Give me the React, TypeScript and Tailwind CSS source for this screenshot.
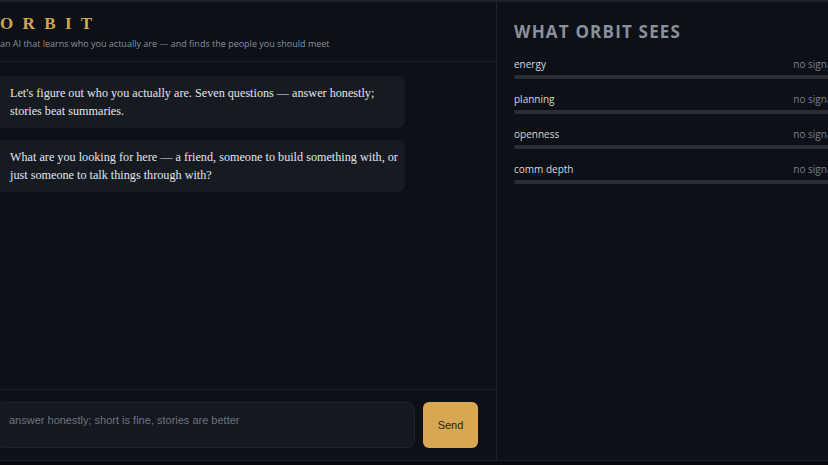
const traits = ["energy", "planning", "openness", "comm depth"];

const messages = [
  "Let's figure out who you actually are. Seven questions — answer honestly; stories beat summaries.",
  "What are you looking for here — a friend, someone to build something with, or just someone to talk things through with?",
];

const App = () => {
  return (
    <div className="w-[828px] h-[465px] overflow-hidden bg-[#07080b]">
      <div className="flex w-[872px] h-[461px] -ml-[20px] bg-[#0d1017] border-t-2 border-b border-[#1d2129]">
        {/* chat column */}
        <div className="w-[517px] flex flex-col border-r border-[#1d2129]">
          <div className="h-[60px] px-[20px] pt-[12px] border-b border-[#1b1f27]">
            <div
              className="text-[17px] font-bold tracking-[0.55em] text-[#d3a552] leading-[20px]"
              style={{ fontFamily: '"Liberation Serif", serif' }}
            >
              ORBIT
            </div>
            <div
              className="mt-[3px] text-[9px] text-[#8a9099] leading-[14px]"
              style={{ fontFamily: '"Open Sans", sans-serif' }}
            >
              an AI that learns who you actually are — and finds the people you should meet
            </div>
          </div>

          <div className="flex-1 px-[16px] pt-[14px] flex flex-col gap-[12px]">
            {messages.map((m, i) => (
              <div
                key={i}
                className="w-[409px] rounded-lg bg-[#161a21] pl-[14px] pr-[6px] py-[8px] text-[12.2px] leading-[18px] text-[#e4e6ea]"
                style={{ fontFamily: '"Liberation Serif", serif' }}
              >
                {m}
              </div>
            ))}
          </div>

          <div className="h-[71px] border-t border-[#1b1f27] flex gap-[8px] pl-[16px] pr-[18px] pt-[12px]">
            <div
              className="flex-1 h-[46px] rounded-lg bg-[#151820] border border-[#1f232b] px-[12px] pt-[9px] text-[11px] text-[#6e747d]"
              style={{ fontFamily: '"Liberation Sans", sans-serif' }}
            >
              answer honestly; short is fine, stories are better
            </div>
            <button
              className="w-[55px] h-[46px] rounded-md bg-[#d8a752] text-[11px] text-[#2a2113]"
              style={{ fontFamily: '"Liberation Sans", sans-serif' }}
            >
              Send
            </button>
          </div>
        </div>

        {/* signals column */}
        <div className="flex-1 px-[17px] pt-[20px]" style={{ fontFamily: '"Open Sans", sans-serif' }}>
          <div className="text-[17px] font-bold tracking-[0.07em] text-[#8a919a] leading-[20px]">
            WHAT ORBIT SEES
          </div>
          <div className="mt-[15px] flex flex-col gap-[13px]">
            {traits.map((t) => (
              <div key={t}>
                <div className="flex justify-between text-[10px] leading-[14px]">
                  <span className="text-[#d4d8de]">{t}</span>
                  <span className="text-[#7a8089]">no signal</span>
                </div>
                <div className="mt-[4px] h-[4px] rounded-full bg-[#2a2f37]" />
              </div>
            ))}
          </div>
        </div>
      </div>
    </div>
  );
};

export default App;
